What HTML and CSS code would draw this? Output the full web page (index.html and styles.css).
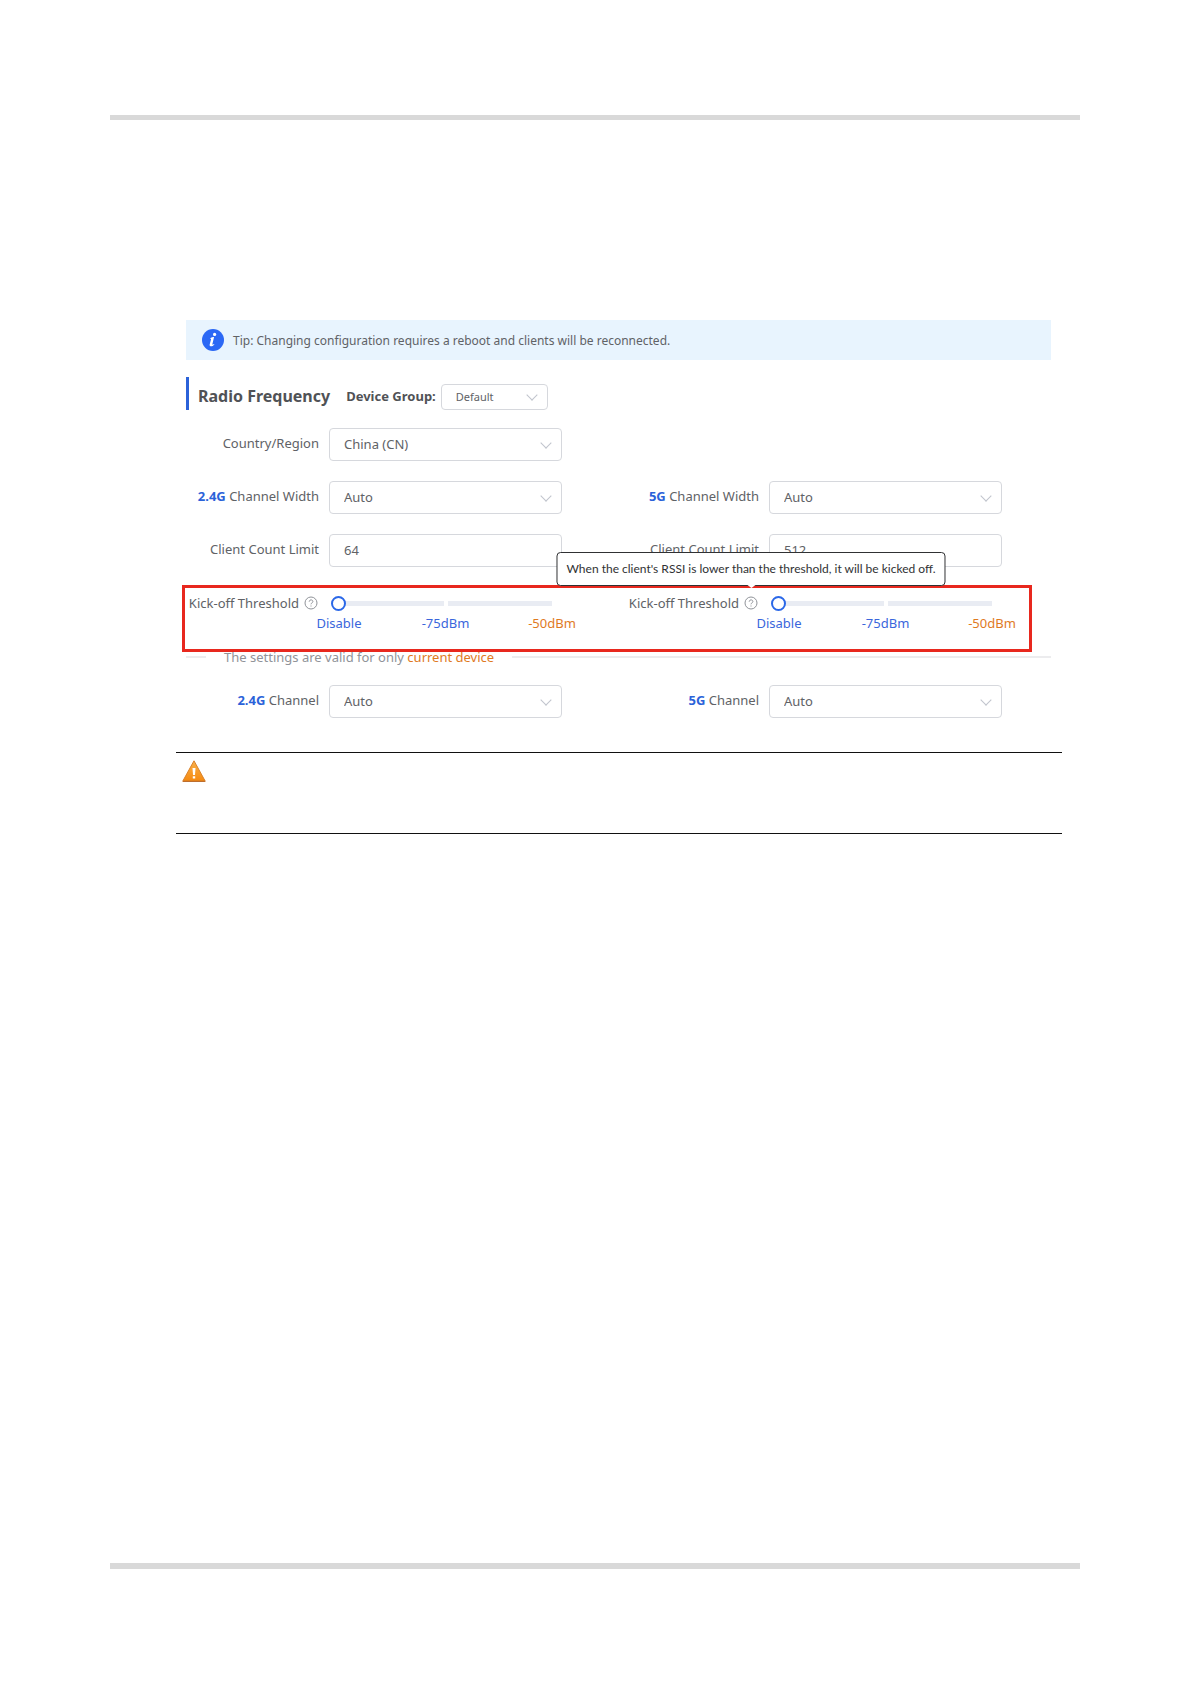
FILE: index.html
```html
<!DOCTYPE html>
<html lang="en">
<head>
<meta charset="UTF-8">
<meta name="viewport" content="width=device-width, initial-scale=1">
<title>Radio Frequency</title>
<link rel="stylesheet" href="styles.css">
</head>
<body>
<div class="page">
    <main class="content">
        <div class="tip">
            <svg class="tip-icon" viewBox="0 0 22 22" aria-hidden="true">
                <circle cx="11" cy="11" r="11" fill="#2b68f5"/>
                <circle cx="12.6" cy="5.4" r="1.6" fill="#fff"/>
                <path d="M8.2 9.3c1.300-.9 2.700-1.300 3.900-1.200l-1.700 6.800c-.2.900.3 1 1.600.1l.4.500c-1.300 1.500-2.700 2-3.800 1.800-1-.2-1.100-1.100-.8-2.200l1.200-4.700c.1-.6-.1-.6-.7-.6z" fill="#fff"/>
            </svg>
            <span>Tip: Changing configuration requires a reboot and clients will be reconnected.</span>
        </div>

        <form class="form">
            <div class="title">
                <h1>Radio Frequency</h1>
                <label for="group">Device Group:</label>
                <span class="select small">
                    <select id="group"><option>Default</option></select>
                </span>
            </div>

            <div class="grid">
                <div class="item">
                    <label for="country">Country/Region</label>
                    <span class="select"><select id="country"><option>China (CN)</option></select></span>
                </div>
            </div>
            <div class="grid">
                <div class="item">
                    <label for="width24"><b>2.4G</b> Channel Width</label>
                    <span class="select"><select id="width24"><option>Auto</option></select></span>
                </div>
                <div class="item">
                    <label for="width5"><b>5G</b> Channel Width</label>
                    <span class="select"><select id="width5"><option>Auto</option></select></span>
                </div>
            </div>
            <div class="grid">
                <div class="item">
                    <label for="limit24">Client Count Limit</label>
                    <input class="text" id="limit24" type="text" value="64">
                </div>
                <div class="item">
                    <label for="limit5">Client Count Limit</label>
                    <input class="text" id="limit5" type="text" value="512">
                </div>
            </div>

            <div class="grid marked">
                <div class="item">
                    <div class="kick-label">
                        <label for="kick24">Kick-off Threshold</label>
                        <span class="help">
                            <svg viewBox="0 0 14 14" aria-hidden="true"><circle cx="7" cy="7" r="6"/><path d="M5.200 5.700c0-2.400 3.700-2.400 3.700-.1 0 1.200-1.900 1.300-1.900 2.700M7 9.500v1"/></svg>
                        </span>
                    </div>
                    <div class="slider">
                        <input id="kick24" type="range" min="0" max="2" value="0">
                        <div class="marks"><span>Disable</span><span>-75dBm</span><span class="orange">-50dBm</span></div>
                    </div>
                </div>
                <div class="item">
                    <div class="kick-label">
                        <label for="kick5">Kick-off Threshold</label>
                        <span class="help">
                            <svg viewBox="0 0 14 14" aria-hidden="true"><circle cx="7" cy="7" r="6"/><path d="M5.200 5.700c0-2.400 3.700-2.400 3.700-.1 0 1.200-1.900 1.300-1.900 2.700M7 9.500v1"/></svg>
                            <span class="tooltip" role="tooltip">When the client's RSSI is lower than the threshold, it will be kicked off.</span>
                        </span>
                    </div>
                    <div class="slider">
                        <input id="kick5" type="range" min="0" max="2" value="0">
                        <div class="marks"><span>Disable</span><span>-75dBm</span><span class="orange">-50dBm</span></div>
                    </div>
                </div>
            </div>

            <div class="divider"><span>The settings are valid for only <span class="orange">current device</span></span></div>

            <div class="grid">
                <div class="item">
                    <label for="channel24"><b>2.4G</b> Channel</label>
                    <span class="select"><select id="channel24"><option>Auto</option></select></span>
                </div>
                <div class="item">
                    <label for="channel5"><b>5G</b> Channel</label>
                    <span class="select"><select id="channel5"><option>Auto</option></select></span>
                </div>
            </div>
        </form>
    </main>

    <div class="caution">
        <svg viewBox="0 0 24 22" role="img" aria-label="Caution">
            <defs>
                <linearGradient id="amber" x1="0" y1="0" x2="0" y2="1">
                    <stop offset="0" stop-color="#f9b04a"/>
                    <stop offset="1" stop-color="#f58a10"/>
                </linearGradient>
            </defs>
            <path d="M12 .8 23.300 21.300H.7z" fill="url(#amber)" stroke="#d9822b" stroke-linejoin="round"/>
            <path d="M1 21.300h22" stroke="#b5652a"/>
            <path d="M10.500 8h3l-.5 7h-2zM10.800 16.200h2.400v2.200h-2.400z" fill="#fff"/>
        </svg>
    </div>
</div>
</body>
</html>
```
FILE: styles.css
```css
* {
    box-sizing: border-box;
}
body {
    margin: 0;
    background: #fff;
    color: #606266;
    font: 13px/20px "Noto Sans", "Open Sans", sans-serif;
}
.page {
    display: flex;
    flex-direction: column;
    min-height: calc(100vh - 230px);
    margin: 115px 111px 115px 110px;
    border-top: 5px solid #d9d9d9;
    border-bottom: 6px solid #d9d9d9;
}
.content {
    margin: 200px 29px 0 76px;
}

/* tip bar */
.tip {
    display: flex;
    align-items: center;
    gap: 9px;
    height: 40px;
    padding: 0 16px;
    background: #e8f4fe;
    font-size: 12px;
}
.tip span {
    padding-top: 2px;
}
.tip-icon {
    width: 22px;
    height: 22px;
}

/* title */
.title {
    display: flex;
    align-items: center;
    height: 33px;
    margin: 17px 0 18px;
    padding: 4px 0 0 9px;
    border-left: 3px solid #2b62d9;
    color: #505256;
    font-weight: bold;
}
.title h1 {
    margin: 0 16px 0 0;
    font-size: 16px;
}

/* form rows */
.grid {
    display: grid;
    grid-template-columns: 1fr 1fr;
    gap: 64px;
    margin-bottom: 20px;
    padding-right: 49px;
}
.item {
    display: flex;
    align-items: center;
    gap: 10px;
}
.item > label,
.kick-label {
    flex: none;
    width: 133px;
    text-align: right;
    white-space: nowrap;
}
.item > label {
    padding-bottom: 4px;
}
.item b {
    color: #2b62d9;
}
.select {
    position: relative;
    flex: 1;
}
.select::after {
    content: "";
    position: absolute;
    top: 50%;
    right: 12px;
    width: 7px;
    height: 7px;
    margin-top: -6px;
    border: solid #c0c4cc;
    border-width: 0 1px 1px 0;
    transform: rotate(45deg);
    pointer-events: none;
}
select,
.text {
    display: block;
    width: 100%;
    height: 33px;
    padding: 0 14px 2px;
    border: 1px solid #d6d8dd;
    border-radius: 4px;
    background: #fff;
    color: #606266;
    font: inherit;
    appearance: none;
}
.text {
    flex: 1;
    min-width: 0;
}
.small {
    flex: none;
    width: 107px;
    margin: 3px 0 0 5px;
}
.small select {
    height: 26px;
    padding-bottom: 0;
    font-weight: normal;
    font-size: 11px;
}

/* kick-off threshold */
.marked {
    position: relative;
    z-index: 1;
    height: 67px;
    margin: -2px 19px 0 -4px;
    padding: 5px 27px 0 1px;
    border: 3px solid #e8281e;
}
.marked .item {
    align-items: flex-start;
}
.kick-label {
    display: flex;
    align-items: center;
    justify-content: flex-end;
    gap: 5px;
}
.help {
    position: relative;
    flex: none;
    width: 14px;
    height: 14px;
    margin-right: 1px;
}
.help svg {
    display: block;
    width: 14px;
    height: 14px;
    fill: none;
    stroke: #909399;
}
.tooltip {
    position: absolute;
    bottom: 24px;
    left: 50%;
    width: max-content;
    padding: 6px 9px;
    border: 1px solid #303133;
    border-radius: 4px;
    background: #fff;
    color: #303133;
    font: 12px/20px Lato, sans-serif;
    transform: translateX(-50%);
}
.tooltip::after {
    content: "";
    position: absolute;
    top: 100%;
    left: 50%;
    margin-left: -4px;
    border: 4px solid transparent;
    border-top: 3px solid #fff;
}
.slider {
    flex: 1;
    min-width: 0;
}
.slider input {
    display: block;
    width: calc(100% - 4px);
    height: 20px;
    margin: 0 2px;
    background:
        linear-gradient(#fff, #fff) center / 4px 5px no-repeat,
        linear-gradient(#e9ecf3, #e9ecf3) center / calc(100% - 16px) 5px no-repeat;
    appearance: none;
}
.slider input::-webkit-slider-thumb {
    width: 15px;
    height: 15px;
    border: 2px solid #2b68e8;
    border-radius: 50%;
    background: #fff;
    appearance: none;
}
.marks {
    display: flex;
    justify-content: space-between;
    margin: 0 -20px;
    color: #3a66dc;
}
.marks span {
    width: 60px;
    text-align: center;
}
.orange,
.marks .orange {
    color: #e07a1f;
}

.divider {
    display: flex;
    align-items: center;
    gap: 18px;
    margin: -5px 0 18px;
    color: #909399;
}
.divider::before,
.divider::after {
    content: "";
    height: 2px;
    background: #ececee;
}
.divider::before {
    width: 20px;
}
.divider::after {
    flex: 1;
}

/* caution block */
.caution {
    height: 82px;
    margin: 14px 18px 0 66px;
    padding: 7px 6px;
    border: solid #111;
    border-width: 1px 0;
}
.caution svg {
    width: 24px;
    height: 22px;
}
```
